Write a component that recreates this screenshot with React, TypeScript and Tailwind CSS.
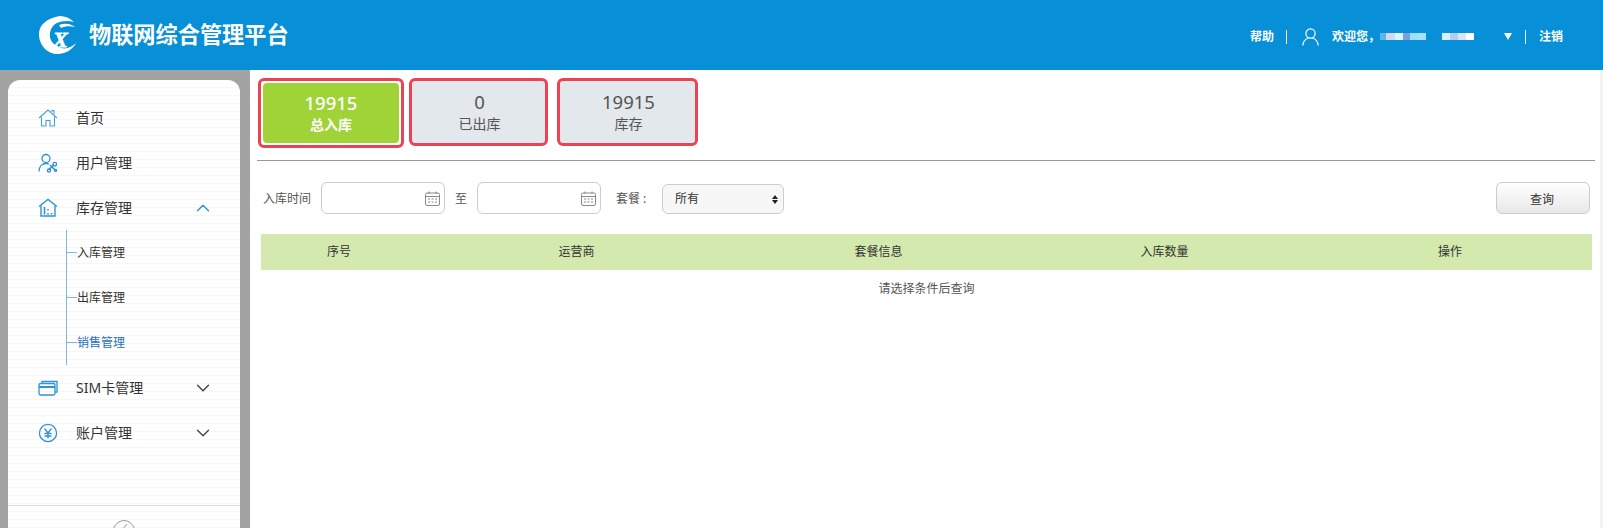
import { ChevronDown, ChevronUp } from "lucide-react";

const FONT = "font-['Noto_Sans','Noto_Sans_CJK_SC',sans-serif]";

function Logo() {
  return (
    <svg width="40" height="40" viewBox="0 0 40 40" className="shrink-0">
      <path d="M22 1 C9 3 0 10 1 21 C2 32 11 40 21 39 C29 38 35 34 38 28 C33 33 26 35 21 32 C14 29 11 24 12 18 C13 13 15 10 19 8 C23 6 30 5 36 7 C32 3 27 1 22 1 Z" fill="#fff" />
      <path d="M21 10 C26 8 32 8 37 12 C32 11 27 11 23 13 Z" fill="#fff" />
      <text x="15" y="32" fontSize="22" fontWeight="700" fontStyle="italic" fontFamily="Liberation Serif, serif" fill="#fff" stroke="#fff" strokeWidth="0.8">
        X
      </text>
    </svg>
  );
}

function HomeIcon() {
  return (
    <svg width="20" height="20" viewBox="0 0 20 20" fill="none" stroke="#4aa0dc" strokeWidth="1.1">
      <path d="M1 10 L10 2 L19 10" />
      <path d="M14 4 V2.5 H16 V6.5" />
      <path d="M3.5 8.5 V18 H8 V12.5 H12 V18 H16.5 V8.5" />
    </svg>
  );
}

function UserToolIcon() {
  return (
    <svg width="20" height="20" viewBox="0 0 20 20" fill="none" stroke="#2f93d6" strokeWidth="1.3">
      <circle cx="8" cy="5.5" r="4" />
      <path d="M1 18.5 C1 13.5 4 10.5 8 10.5 C9 10.5 10 10.7 10.8 11.1" />
      <path d="M10.5 17 L16 11.5 M12 12 L17.5 17.5" strokeWidth="1.6" />
      <circle cx="16.8" cy="11.2" r="1.8" />
      <circle cx="11" cy="17.6" r="1.6" />
      <circle cx="17.6" cy="17.4" r="1" />
    </svg>
  );
}

function StoreIcon() {
  return (
    <svg width="20" height="20" viewBox="0 0 20 20" fill="none" stroke="#2f93d6" strokeWidth="1.4">
      <path d="M1 8.5 L10 1.5 L19 8.5" />
      <path d="M3 7.5 V18 H17 V7.5" />
      <path d="M6.5 9 V16.5 M10 11 V12.5 M10 15 V16.5 M13.5 15 V16.5" strokeWidth="1.6" />
    </svg>
  );
}

function CardIcon() {
  return (
    <svg width="20" height="20" viewBox="0 0 20 20" fill="none" stroke="#2f93d6" strokeWidth="1.3">
      <path d="M4 5 V3.5 H19 V14 H17" />
      <rect x="1" y="5.5" width="16" height="11.5" rx="1.5" />
      <path d="M1 9 H17" strokeWidth="2" />
    </svg>
  );
}

function YenIcon() {
  return (
    <svg width="20" height="20" viewBox="0 0 20 20" fill="none" stroke="#2f93d6" strokeWidth="1.3">
      <circle cx="10" cy="10" r="8.6" />
      <path d="M6.5 5.5 L10 10 L13.5 5.5 M10 10 V15.5 M6.5 10.5 H13.5 M6.5 13 H13.5" />
    </svg>
  );
}

function CalendarIcon() {
  return (
    <svg width="15" height="15" viewBox="0 0 15 15" fill="none" stroke="#888" strokeWidth="1">
      <rect x="0.5" y="2" width="14" height="12.5" rx="1.5" />
      <path d="M0.5 5.5 H14.5 M4 0.5 V3 M11 0.5 V3" />
      <path d="M3 8 H5 M6.5 8 H8.5 M10 8 H12 M3 11 H5 M6.5 11 H8.5 M10 11 H12" strokeWidth="1.2" />
    </svg>
  );
}

function UserIcon() {
  return (
    <svg width="17" height="18" viewBox="0 0 17 18" fill="none" stroke="#fff" strokeWidth="1.2">
      <circle cx="8.5" cy="5.5" r="4.6" />
      <path d="M0.8 17.5 C1.2 13 4 10.8 6.3 10 M16.2 17.5 C15.8 13 13 10.8 10.7 10" />
    </svg>
  );
}

function MenuItem({ icon, label, open, hasArrow }: { icon: React.ReactNode; label: string; open?: boolean; hasArrow?: boolean }) {
  return (
    <div className="flex h-[45px] items-center pl-[30px] pr-[26px]">
      <span className="flex w-[38px] shrink-0">{icon}</span>
      <span className="flex-1 text-sm text-[#333]">{label}</span>
      {hasArrow &&
        (open ? (
          <ChevronUp size={22} strokeWidth={1.5} className="text-[#2f93d6]" />
        ) : (
          <ChevronDown size={22} strokeWidth={1.5} className="text-[#444]" />
        ))}
    </div>
  );
}

function SubItem({ label, active }: { label: string; active?: boolean }) {
  return (
    <div className="flex h-[45px] items-center">
      <span className="h-px w-[10px] bg-[#7dbbdc]" />
      <span className={`text-xs ${active ? "text-[#1f6fc0]" : "text-[#333]"}`}>{label}</span>
    </div>
  );
}

function Sidebar() {
  return (
    <aside className="h-full w-[250px] shrink-0 bg-[#a3a3a3] pl-2 pr-[10px] pt-[10px]">
      <div className="flex h-full flex-col overflow-hidden rounded-t-xl bg-white bg-[repeating-linear-gradient(to_bottom,#fff_0,#fff_7px,#f6f6f6_7px,#f6f6f6_8px)]">
        <nav className="h-[425px] shrink-0 pt-[15px]">
          <MenuItem icon={<HomeIcon />} label="首页" />
          <MenuItem icon={<UserToolIcon />} label="用户管理" />
          <MenuItem icon={<StoreIcon />} label="库存管理" hasArrow open />
          <div className="ml-[58px] border-l border-[#7dbbdc]">
            <SubItem label="入库管理" />
            <SubItem label="出库管理" />
            <SubItem label="销售管理" active />
          </div>
          <MenuItem icon={<CardIcon />} label="SIM卡管理" hasArrow />
          <MenuItem icon={<YenIcon />} label="账户管理" hasArrow />
        </nav>
        <div className="flex flex-1 justify-center border-t border-[#dcdcdc] pt-[14px]">
          <svg width="22" height="22" viewBox="0 0 22 22" fill="none" stroke="#999" strokeWidth="1" className="shrink-0">
            <circle cx="11" cy="11" r="10.5" />
            <path d="M14 4 L8 11 L14 18" />
          </svg>
        </div>
      </div>
    </aside>
  );
}

function Stat({ value, label, active, className }: { value: string; label: string; active?: boolean; className: string }) {
  return (
    <div className={`rounded-md border-[3px] border-[#ec4256] ${active ? "bg-white p-[2px]" : "bg-[#e2e8ec]"} ${className}`}>
      <div className={`flex h-full flex-col items-center justify-center rounded ${active ? "bg-[#9fd338] text-white" : "pl-0.5 text-[#555]"}`}>
        <span className={`text-[18.5px] leading-6 ${active ? "font-medium" : ""}`}>{value}</span>
        <span className={`text-sm leading-5 ${active ? "font-bold" : ""}`}>{label}</span>
      </div>
    </div>
  );
}

function DateInput() {
  return (
    <div className="flex h-8 w-[124px] items-center justify-end rounded-md border border-[#ccc] bg-white pr-1">
      <CalendarIcon />
    </div>
  );
}

export default function App() {
  return (
    <div className={`flex h-[528px] w-[1603px] flex-col overflow-hidden bg-white ${FONT}`}>
      <header className="flex h-[70px] shrink-0 items-center bg-[#0790d8] pl-[38px] pr-10 text-white">
        <Logo />
        <h1 className="ml-[11px] text-[22.2px] font-bold">物联网综合管理平台</h1>
        <div className="ml-auto flex items-center pt-[3px] text-xs font-bold">
          <span>帮助</span>
          <span className="ml-3 h-3.5 w-px bg-white" />
          <span className="ml-[15px] flex">
            <UserIcon />
          </span>
          <span className="ml-[13px] w-[48px]">欢迎您，</span>
          <span className="flex h-[7px]">
            <i className="w-[6px] bg-[#5fb5e6]" />
            <i className="w-[9px] bg-[#d4d9f2]" />
            <i className="w-[8px] bg-[#d9f8fd]" />
            <i className="w-[7px] bg-[#7c9edb]" />
            <i className="w-[8px] bg-[#9ce0f8]" />
            <i className="w-[8px] bg-[#a5e3fa]" />
          </span>
          <span className="ml-[16px] flex h-[7px]">
            <i className="w-[8px] bg-[#d8effc]" />
            <i className="w-[8px] bg-[#b5cdf0]" />
            <i className="w-[8px] bg-[#d6e6f8]" />
            <i className="w-[8px] bg-white" />
          </span>
          <span className="ml-[30px] h-0 w-0 border-x-[4.5px] border-t-[7px] border-x-transparent border-t-white" />
          <span className="ml-[13px] h-3.5 w-px bg-white" />
          <span className="ml-[13px]">注销</span>
        </div>
      </header>
      <div className="flex min-h-0 flex-1">
        <Sidebar />
        <main className="min-w-0 flex-1 border-r-[3px] border-[#f4f4f4] pl-[7px] pr-[5px] pt-2 text-xs text-[#555]">
          <div className="flex h-[70px] items-start pl-px">
            <Stat value="19915" label="总入库" active className="h-[70px] w-[146px]" />
            <Stat value="0" label="已出库" className="ml-[5px] h-[68px] w-[139px]" />
            <Stat value="19915" label="库存" className="ml-[9px] h-[68px] w-[141px]" />
          </div>
          <hr className="mt-3 border-[#999]" />
          <div className="mt-[21px] flex items-center pl-1.5 pr-[5px]">
            <span className="w-[58px] pt-0.5">入库时间</span>
            <DateInput />
            <span className="ml-2.5 w-[22px] pt-0.5">至</span>
            <DateInput />
            <span className="ml-[15px] w-[46px] pt-0.5">套餐 :</span>
            <div className="mt-0.5 flex h-[30px] w-[122px] items-center justify-between rounded-md border border-[#ccc] bg-[#f7f7f7] pl-3 pr-[5px] text-[#333]">
              所有
              <span className="flex flex-col gap-px">
                <i className="h-0 w-0 border-x-[3px] border-b-4 border-x-transparent border-b-[#222]" />
                <i className="h-0 w-0 border-x-[3px] border-t-4 border-x-transparent border-t-[#222]" />
              </span>
            </div>
            <button className="ml-auto h-8 w-[94px] rounded-md border border-[#ccc] bg-gradient-to-b from-white to-[#e8e8e8] pr-0.5 pt-1 text-[#333]">
              查询
            </button>
          </div>
          <div className="ml-1 mr-[3px] mt-5">
            <div className="grid h-9 grid-cols-[156px_319px_285px_287px_1fr] items-center bg-[#d4e9ae] text-center text-[#333]">
              <span>序号</span>
              <span>运营商</span>
              <span>套餐信息</span>
              <span>入库数量</span>
              <span>操作</span>
            </div>
            <p className="mt-[11px] text-center">请选择条件后查询</p>
          </div>
        </main>
      </div>
    </div>
  );
}
